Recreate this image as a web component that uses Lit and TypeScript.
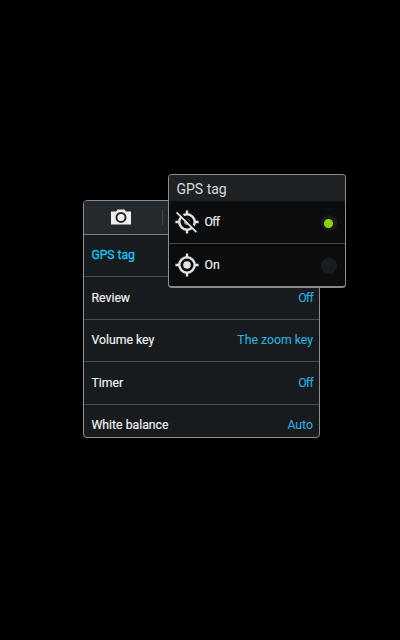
import { LitElement, html, css, svg } from "lit";
import { customElement, property } from "lit/decorators.js";
import { classMap } from "lit/directives/class-map.js";

@customElement("gps-icon")
class GpsIcon extends LitElement {
  @property({ type: Boolean }) off = false;

  static styles = css`
    :host { display: block; width: 24px; height: 24px; }
    svg { display: block; }
  `;

  render() {
    return html`<svg width="24" height="24" viewBox="0 0 24 24" fill="none" stroke="#e2e2e2">
      <circle cx="12" cy="12" r="7.7" stroke-width="2.4" />
      <path d="M12 .4V5M12 19v4.6M.4 12H5M19 12h4.6" stroke-width="2.4" />
      ${this.off
        ? svg`<circle cx="12" cy="12" r="3" fill="#8c8e8f" stroke="none" />
            <path d="M3.4 2.4 22.2 21.2" stroke="#0b0c0e" stroke-width="3.2" />
            <path d="M1.6 2.4 21.4 22.2" stroke-width="1.8" />`
        : svg`<circle cx="12" cy="12" r="3.8" fill="#e2e2e2" stroke="none" />`}
    </svg>`;
  }
}

@customElement("app-root")
class AppRoot extends LitElement {
  static styles = css`
    :host {
      display: block;
      position: relative;
      box-sizing: border-box;
      width: 400px;
      height: 640px;
      padding: 200px 0 0 83px;
      background: #000;
      overflow: hidden;
      font: 12.25px/16px Roboto, sans-serif;
      color: #f4f4f4;
    }
    .panel {
      box-sizing: border-box;
      width: 236.5px;
      height: 238px;
      border: 1px solid #8b8e90;
      border-radius: 4px;
      background: #171b1e;
      overflow: hidden;
    }
    .tabs {
      box-sizing: border-box;
      height: 33.5px;
      display: flex;
      align-items: center;
      background: #24292d;
      border-bottom: 1.5px solid #777d82;
    }
    .tab {
      display: flex;
      justify-content: center;
      width: 79px;
      box-sizing: border-box;
      border-right: 1px solid #454b50;
      height: 15px;
    }
    .tab svg { margin-left: -4px; margin-top: -1px; }
    .row {
      box-sizing: border-box;
      height: 42.5px;
      padding: 0 5.5px 0 7.5px;
      display: flex;
      align-items: center;
      justify-content: space-between;
      border-bottom: 1px solid #4b4f52;
      -webkit-text-stroke: 0.15px currentColor;
    }
    .row.active {
      color: #22bdec;
      letter-spacing: -0.1px;
      -webkit-text-stroke-width: 0.35px;
    }
    .row:last-child { border-bottom: 0; height: 41.5px; }
    .value { color: #2fabd9; }
    .tight { letter-spacing: -0.7px; }
    .dialog {
      position: absolute;
      left: 168px;
      top: 174px;
      width: 178px;
      height: 114px;
      box-sizing: border-box;
      border: 1px solid #8a8c8d;
      border-bottom: 2px solid #88898b;
      border-radius: 4px;
      background: #0b0c0e;
      overflow: hidden;
    }
    .title {
      height: 26px;
      padding-left: 7.5px;
      font-size: 14px;
      line-height: 28px;
      background: #1e2225;
      color: #d8dadb;
    }
    .option {
      box-sizing: border-box;
      height: 42.5px;
      padding: 0 8.5px 0 6px;
      display: flex;
      align-items: center;
      border-bottom: 1px solid #46484a;
      -webkit-text-stroke: 0.15px currentColor;
    }
    .option:last-child { border-bottom: 0; }
    .label { flex: 1; padding-left: 5.5px; }
    .radio {
      width: 16px;
      height: 16px;
      border-radius: 50%;
      background: #191c21;
      display: flex;
      align-items: center;
      justify-content: center;
      margin-top: 3px;
    }
    .dot { width: 8.5px; height: 8.5px; border-radius: 50%; background: #8fcf0e; }
  `;

  rows = [
    ["GPS tag", ""],
    ["Review", "Off"],
    ["Volume key", "The zoom key"],
    ["Timer", "Off"],
    ["White balance", "Auto"],
  ];

  render() {
    return html`
      <div class="panel">
        <div class="tabs">
          <div class="tab">
            <svg width="20" height="16" viewBox="0 0 20 16">
              <path fill="#f0f0f0" d="M0 2.5h5.2L6.5.6h7l1.3 1.9H20v13H0z" />
              <circle cx="10" cy="8.4" r="4.5" fill="#f0f0f0" stroke="#24292d" stroke-width="2" />
            </svg>
          </div>
        </div>
        ${this.rows.map(
          ([label, value], i) => html`<div class=${classMap({ row: true, active: i === 0 })}>
            <span>${label}</span>
            <span class=${classMap({ value: true, tight: value === "Off" })}>${value}</span>
          </div>`
        )}
      </div>
      <div class="dialog">
        <div class="title">GPS tag</div>
        ${["Off", "On"].map(
          (label, i) => html`<div class="option">
            <gps-icon ?off=${i === 0}></gps-icon>
            <span class=${classMap({ label: true, tight: i === 0 })}>${label}</span>
            <span class="radio">${i === 0 ? html`<span class="dot"></span>` : ""}</span>
          </div>`
        )}
      </div>
    `;
  }
}
